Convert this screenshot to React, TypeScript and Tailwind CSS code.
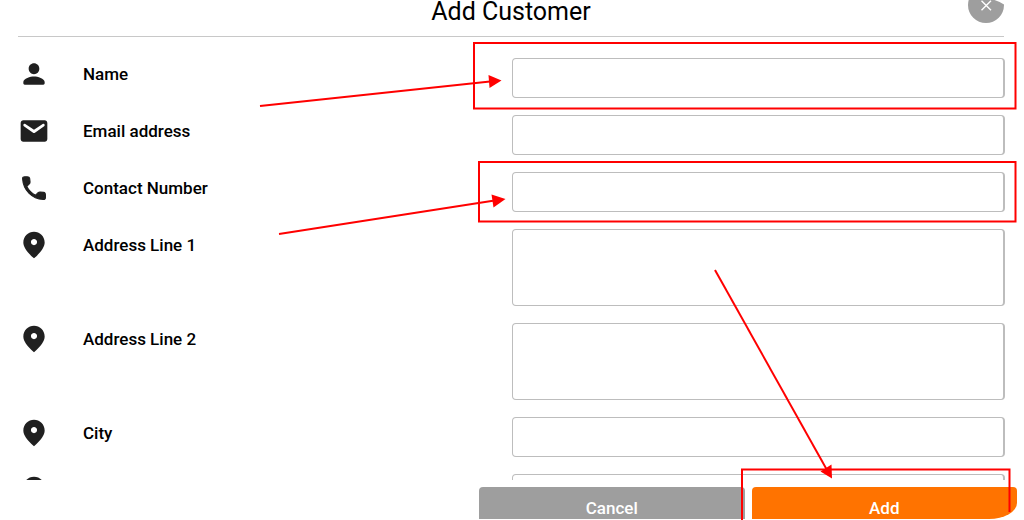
type IconShape = { d: string; outline?: boolean };

const PERSON: IconShape = {
  d: "M12 12.100c2.210 0 4-1.800 4-4.100s-1.790-4-4-4-4 1.790-4 4 1.790 4.100 4 4.100zm0 1.700c-2.670 0-8 1.400-8 4.200v1c0 .55.45 1 1 1h14c.55 0 1-.45 1-1v-1c0-2.800-5.330-4.200-8-4.200z",
};
const MAIL: IconShape = {
  d: "M20 4H4c-1.100 0-2 .9-2 2v12c0 1.100.9 2 2 2h16c1.100 0 2-.9 2-2V6c0-1.100-.9-2-2-2zM19.600 8.500l-6.900 4.800c-.45.3-.95.3-1.400 0L4.400 8.500c-.4-.3-.5-.7-.4-1.100.2-.7.950-.95 1.500-.6L12 11l6.500-4.200c.55-.35 1.300-.1 1.500.6.1.4 0 .8-.4 1.100z",
};
const PHONE: IconShape = {
  outline: true,
  d: "M19.230 15.260l-2.540-.29c-.61-.07-1.210.14-1.640.57l-1.840 1.840c-2.830-1.440-5.150-3.750-6.590-6.590l1.850-1.850c.43-.43.64-1.030.57-1.640l-.29-2.520c-.12-1.010-.97-1.270-1.990-1.270H5.030c-1.030 0-1.670.54-1.600 1.570.53 8.540 6.960 15.060 15.490 15.590 1.030.07 1.670-.57 1.670-1.600v-1.830c.01-1.010-.35-1.860-1.360-1.980z",
};
const PIN: IconShape = {
  d: "M12 2c-4.200 0-8 3.220-8 8.200 0 3.320 2.670 7.250 8 11.800 5.330-4.550 8-8.480 8-11.800C20 5.220 16.200 2 12 2zm0 10.100c-1.270 0-2.300-1.030-2.300-2.300s1.030-2.300 2.300-2.300 2.300 1.030 2.300 2.300-1.030 2.300-2.300 2.300z",
};

function Icon({ shape }: { shape: IconShape }) {
  return (
    <svg viewBox="0 0 24 24" className="size-8 shrink-0 fill-[#202020]" aria-hidden="true">
      <path d={shape.d} stroke={shape.outline ? "#202020" : "none"} strokeWidth="0.8" />
    </svg>
  );
}

type Field = { id: string; label?: string; icon: IconShape; type?: string; multiline?: boolean };

const fields: Field[] = [
  { id: "name", label: "Name", icon: PERSON, type: "text" },
  { id: "email", label: "Email address", icon: MAIL, type: "email" },
  { id: "phone", label: "Contact Number", icon: PHONE, type: "tel" },
  { id: "address1", label: "Address Line 1", icon: PIN, multiline: true },
  { id: "address2", label: "Address Line 2", icon: PIN, multiline: true },
  { id: "city", label: "City", icon: PIN, type: "text" },
  { id: "more", icon: PIN, type: "text" },
];

const control =
  "block w-full rounded border border-r-2 border-[#bdbdbd] bg-white px-3 text-base outline-none";

function Row({ field }: { field: Field }) {
  return (
    <div className="grid grid-cols-2 items-start">
      <label
        htmlFor={field.id}
        className="flex h-8 items-center gap-[33px] text-[17px] font-medium text-black"
      >
        <Icon shape={field.icon} />
        {field.label && <span className="pt-0.5">{field.label}</span>}
      </label>
      {field.multiline ? (
        <textarea id={field.id} className={`${control} h-[77px] resize-none`} />
      ) : (
        <input id={field.id} type={field.type} className={`${control} h-10`} />
      )}
    </div>
  );
}

function Annotations() {
  return (
    <svg
      viewBox="0 0 1024 520"
      className="pointer-events-none absolute inset-0 size-full"
      aria-hidden="true"
    >
      <g fill="none" stroke="#ff0000" strokeWidth="2">
        <rect x="474" y="43" width="541.5" height="65.5" />
        <rect x="479" y="162" width="536.5" height="59.5" />
        <path d="M742 520V469.5H1009.5V512" />
        <path d="M260 106L490 81.5" />
        <path d="M279 234L493 200.8" />
        <path d="M715 270L827 470" />
      </g>
      <g fill="#ff0000">
        <path d="M501.5 80.5L488.5 75L489.5 88Z" />
        <path d="M505.5 199L491.5 194.5L493.500 207.5Z" />
        <path d="M832 478.5L820.5 471.5L831.5 464.5Z" />
      </g>
    </svg>
  );
}

export default function App() {
  return (
    <div className="relative flex h-screen flex-col overflow-hidden bg-white font-[Roboto,sans-serif]">
      <header className="mr-5 ml-[18px] flex h-[37px] shrink-0 items-start border-b border-[#c8c8c8]">
        <span className="w-9" />
        <h1 className="flex-1 text-center text-[25px] leading-6 text-black">Add Customer</h1>
        <button type="button" aria-label="Close" className="h-6 w-9">
          <svg viewBox="0 0 36 24" className="h-6 w-9">
            <path d="M0 5A18 18 0 0 0 36 5V4.500Q32 1.500 26.500 0H.7A18 18 0 0 0 0 5Z" fill="#9e9e9e" />
            <path d="M13.500 .8L23 10.300M23 .8L13.500 10.300" stroke="#fff" strokeWidth="1.400" />
          </svg>
        </button>
      </header>

      <form
        id="customer"
        className="flex min-h-0 flex-1 flex-col gap-[17px] overflow-hidden pt-[21px] pr-[19px] pl-[18px]"
      >
        {fields.map((field) => (
          <Row key={field.id} field={field} />
        ))}
      </form>

      <footer className="mt-[7px] mr-[7px] mb-px ml-[479px] flex h-8 shrink-0 gap-[7px] overflow-hidden rounded-br-[28px_16px] text-[17px] font-medium text-white">
        <button type="button" className="h-11 flex-1 rounded bg-[#9e9e9e]">
          Cancel
        </button>
        <button type="submit" form="customer" className="h-11 flex-1 rounded bg-[#ff7300]">
          Add
        </button>
      </footer>

      <Annotations />
    </div>
  );
}
